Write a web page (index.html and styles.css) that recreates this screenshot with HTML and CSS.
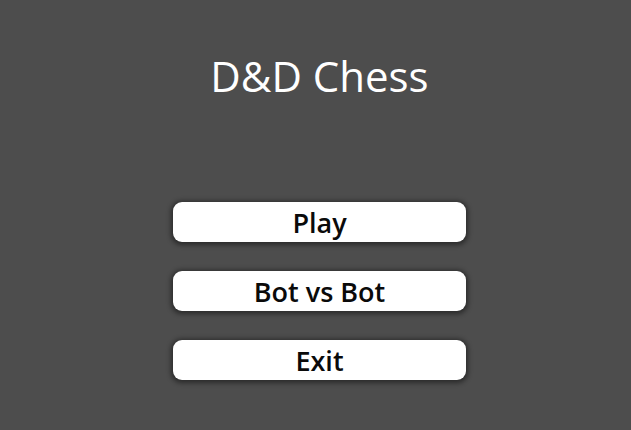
FILE: index.html
```html
<!DOCTYPE html>
<html lang="en">
<head>
    <meta charset="UTF-8">
    <meta name="viewport" content="width=device-width, initial-scale=1.0">
    <title>D&amp;D Chess</title>
    <link rel="stylesheet" href="styles.css">
</head>
<body>

    <div class="menu">
        <h1 class="menu-title">D&amp;D Chess</h1>

        <div class="menu-buttons">
            <button class="menu-button" id="playButton">Play</button>
            <button class="menu-button" id="botButton">Bot vs Bot</button>
            <button class="menu-button" id="exitButton">Exit</button>
        </div>
    </div>

</body>
</html>
```

FILE: styles.css
```css
html, body {
    margin: 0;
    height: 100%;
}

body {
    background-color: #4d4d4d;
    color: #fff;
    font-family: "Open Sans", sans-serif;
}

.menu {
    display: flex;
    flex-direction: column;
    align-items: center;
    padding-left: 8px;
}

.menu-title {
    margin: 49px 0 0;
    font-size: 42px;
    font-weight: 500;
    line-height: 53px;
}

.menu-buttons {
    display: flex;
    flex-direction: column;
    gap: 29px;
    margin-top: 100px;
}

.menu-button {
    width: 293px;
    height: 40px;
    padding: 0;
    border: none;
    border-radius: 9px;
    background-color: #fff;
    color: #0a0a0a;
    font-family: "Open Sans", sans-serif;
    font-size: 27px;
    font-weight: 600;
    box-shadow: 0 1px 5px 2px rgba(0, 0, 0, 0.45);
    cursor: pointer;
}
```
